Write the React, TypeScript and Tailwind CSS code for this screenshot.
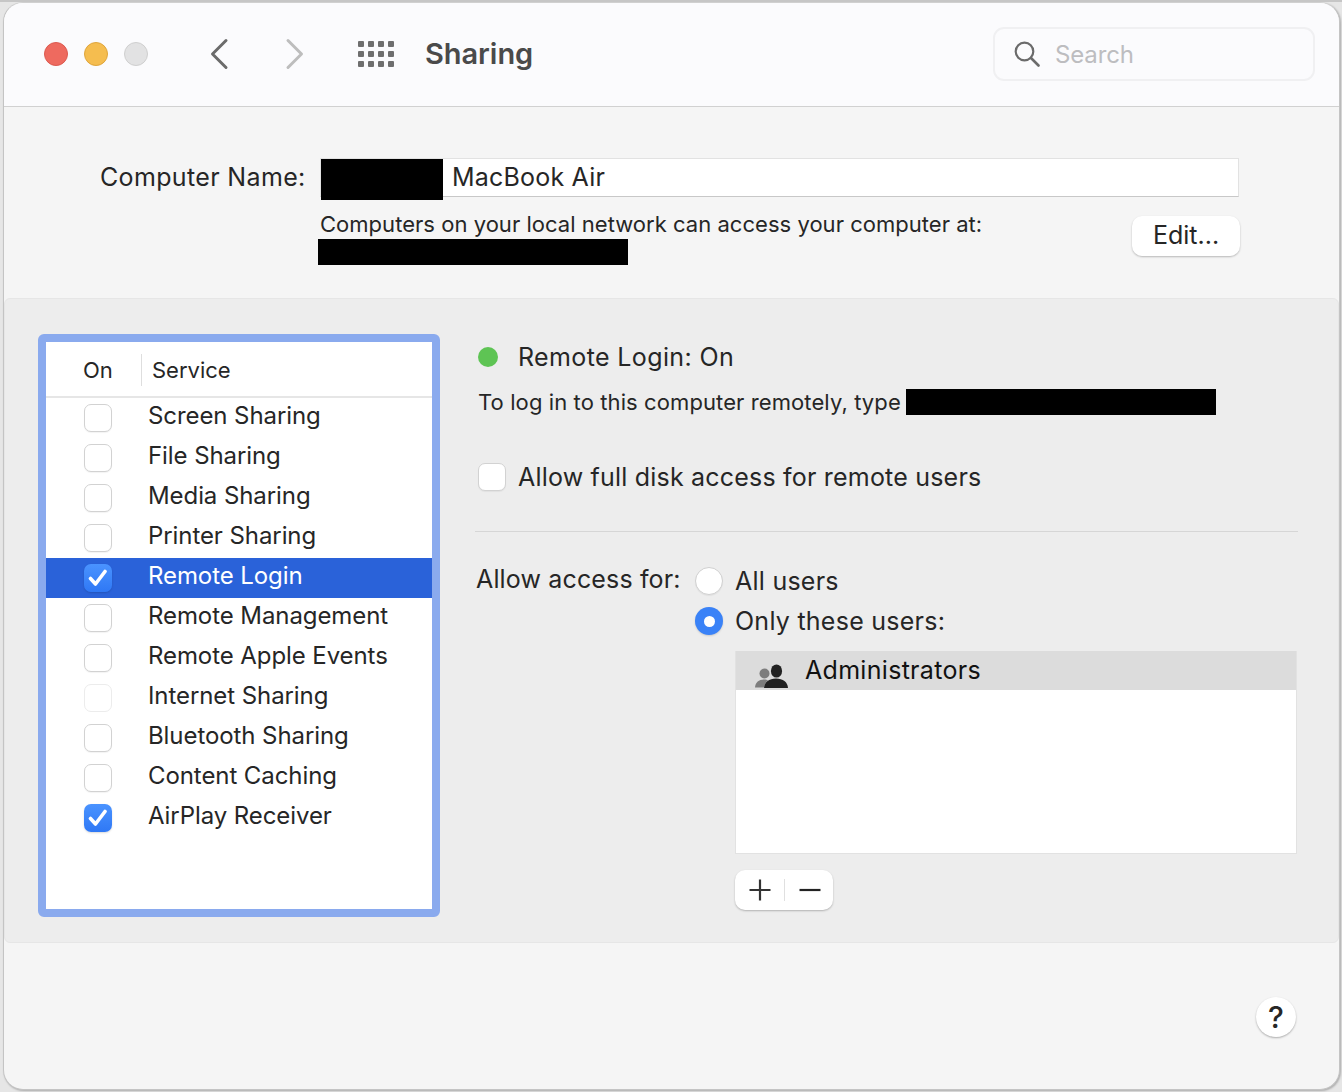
import React from "react";

const services: { name: string; on?: boolean; selected?: boolean; dim?: boolean }[] = [
  { name: "Screen Sharing" },
  { name: "File Sharing" },
  { name: "Media Sharing" },
  { name: "Printer Sharing" },
  { name: "Remote Login", on: true, selected: true },
  { name: "Remote Management" },
  { name: "Remote Apple Events" },
  { name: "Internet Sharing", dim: true },
  { name: "Bluetooth Sharing" },
  { name: "Content Caching" },
  { name: "AirPlay Receiver", on: true },
];

function Check({ on, dim }: { on?: boolean; dim?: boolean }) {
  if (on) {
    return (
      <span className="flex h-[28px] w-[28px] shrink-0 items-center justify-center rounded-[7px] bg-gradient-to-b from-[#4a93ff] to-[#2f78f5] shadow-[0_1px_2px_rgba(0,0,0,0.15)]">
        <svg width="20" height="20" viewBox="0 0 20 20" fill="none">
          <path d="M2.5 10.5 L7.5 16 L17 3.5" stroke="#fff" strokeWidth="3.6" strokeLinecap="round" strokeLinejoin="round" />
        </svg>
      </span>
    );
  }
  return (
    <span
      className={
        dim
          ? "h-[28px] w-[28px] shrink-0 rounded-[7px] border border-[#ececec] bg-white"
          : "h-[28px] w-[28px] shrink-0 rounded-[7px] border border-[#d2d2d2] bg-white shadow-[0_1px_1px_rgba(0,0,0,0.05)]"
      }
    />
  );
}

function Redact({ className }: { className: string }) {
  return <div className={"bg-black " + className} />;
}

export default function App() {
  return (
    <div
      className="h-[1092px] w-[1342px] overflow-hidden border-t-2 border-[#c6c6c6] bg-[#e6e6e6] pb-[2px] pl-[3px] pr-[2px] text-[#262626] antialiased"
      style={{ fontFamily: '"Inter", "Liberation Sans", sans-serif' }}
    >
      <div className="flex h-[1088px] w-[1337px] flex-col overflow-hidden rounded-[20px] border border-[#c4c4c4] border-t-[#d0d0d0] bg-[#f5f5f5] shadow-[1px_1px_2px_rgba(0,0,0,0.25)]">
        {/* toolbar */}
        <div className="flex h-[104px] shrink-0 items-center border-b border-[#d1d1d1] bg-[#fbfbfd] pb-[2px] pl-[40px] pr-[24px]">
          <span className="h-[24px] w-[24px] rounded-full border border-[#dc5a50] bg-[#ee6a5f]" />
          <span className="ml-[16px] h-[24px] w-[24px] rounded-full border border-[#dfa53c] bg-[#f5bd4f]" />
          <span className="ml-[16px] h-[24px] w-[24px] rounded-full border border-[#cfcfcf] bg-[#e2e2e3]" />
          <svg className="ml-[61px]" width="20" height="32" viewBox="0 0 20 32" fill="none">
            <path d="M17 2.5 L3.5 16 L17 29.5" stroke="#6b6b6b" strokeWidth="3" strokeLinecap="round" strokeLinejoin="round" />
          </svg>
          <svg className="ml-[56px]" width="20" height="32" viewBox="0 0 20 32" fill="none">
            <path d="M3 2.5 L16.5 16 L3 29.5" stroke="#bdbdbd" strokeWidth="3" strokeLinecap="round" strokeLinejoin="round" />
          </svg>
          <svg className="ml-[53px]" width="36" height="26" viewBox="0 0 36 26" fill="#6e6e6e">
            {[0, 10, 20].map((y) =>
              [0, 10, 20, 30].map((x) => <rect key={x + "-" + y} x={x} y={y} width="6" height="6" rx="1" />)
            )}
          </svg>
          <div className="ml-[31px] text-[29px] font-semibold tracking-[-0.05px] text-[#4a4a4a]">Sharing</div>
          <div className="ml-auto flex h-[54px] w-[322px] items-center rounded-[11px] border-2 border-[#f0f0f2] pl-[19px]">
            <svg width="26" height="26" viewBox="0 0 26 26" fill="none">
              <circle cx="10.5" cy="10.5" r="8.8" stroke="#6b6b6b" strokeWidth="2.2" />
              <path d="M17 17 L24.5 24.5" stroke="#6b6b6b" strokeWidth="2.6" strokeLinecap="round" />
            </svg>
            <span className="ml-[15px] translate-y-[1px] text-[24px] tracking-[-0.15px] text-[#bdbdc0]">Search</span>
          </div>
        </div>

        {/* computer name */}
        <div className="flex h-[191px] shrink-0 flex-col pl-[96px] pt-[51px]">
          <div className="flex items-center">
            <div className="w-[205px] whitespace-nowrap text-[25px] leading-[39px] tracking-[0.35px]">Computer Name:</div>
            <div className="ml-[15px] flex h-[39px] w-[919px] items-start border border-[#e2e2e2] border-b-[#c8c8c8] bg-white">
              <Redact className="h-[41px] w-[122px] shrink-0" />
              <span className="ml-[9px] text-[25px] leading-[37px] tracking-[0.2px] text-[#262626]">MacBook Air</span>
            </div>
          </div>
          <div className="flex">
            <div className="ml-[220px] w-[812px] pt-[14px]">
              <div className="text-[22px] leading-[26px] tracking-[0.03px]">Computers on your local network can access your computer at:</div>
              <Redact className="-ml-[2px] mt-[2px] h-[26px] w-[310px]" />
            </div>
            <div className="mt-[19px] flex h-[40px] w-[108px] items-center justify-center rounded-[10px] bg-white text-[25px] shadow-[0_1px_2px_rgba(0,0,0,0.25)]">
              Edit...
            </div>
          </div>
        </div>

        {/* main panel */}
        <div className="flex h-[645px] shrink-0 rounded-[6px] border border-[#e6e6e6] bg-[#ededed] pl-[33px] pt-[35px]">
          <div className="h-[583px] w-[402px] shrink-0 rounded-[6px] border-[8px] border-[#8aaaee] bg-white">
            <div className="flex h-[56px] items-center border-b-2 border-[#e6e6e6] pt-[2px] text-[22px]">
              <span className="ml-[37px] w-[58px]">On</span>
              <span className="h-[32px] w-[1px] bg-[#dedede]" />
              <span className="ml-[10px]">Service</span>
            </div>
            {services.map((s) => (
              <div
                key={s.name}
                className={
                  s.selected
                    ? "flex h-[40px] items-center bg-[#2a62d9] pl-[38px] text-white"
                    : "flex h-[40px] items-center pl-[38px]"
                }
              >
                <Check on={s.on} dim={s.dim} />
                <span className="ml-[36px] -translate-y-[2px] text-[24px] tracking-[-0.08px]">{s.name}</span>
              </div>
            ))}
          </div>

          <div className="ml-[34px] flex w-[824px] flex-col">
            <div className="flex h-[46px] items-center pl-[4px]">
              <span className="h-[20px] w-[20px] rounded-full bg-[#5ec454]" />
              <span className="ml-[20px] translate-y-[1px] text-[25px] tracking-[0.37px]">Remote Login: On</span>
            </div>
            <div className="mt-[9px] flex h-[26px] items-center pl-[4px]">
              <span className="text-[22px] tracking-[0.1px]">To log in to this computer remotely, type</span>
              <Redact className="ml-[5px] h-[26px] w-[310px]" />
            </div>
            <div className="mt-[48px] flex h-[28px] items-center pl-[4px]">
              <Check />
              <span className="ml-[12px] translate-y-[1px] text-[25px] tracking-[0.2px]">Allow full disk access for remote users</span>
            </div>
            <div className="ml-[1px] mt-[40px] h-[1px] bg-[#d6d6d6]" />
            <div className="mt-[35px] flex h-[28px] items-center">
              <span className="ml-[2px] w-[219px] -translate-y-[1px] text-[25px] tracking-[0.15px]">Allow access for:</span>
              <span className="h-[28px] w-[28px] rounded-full border border-[#d0d0d0] bg-white shadow-[0_1px_1px_rgba(0,0,0,0.05)]" />
              <span className="ml-[12px] translate-y-[1px] text-[25px] tracking-[0.25px]">All users</span>
            </div>
            <div className="mt-[12px] flex h-[28px] items-center pl-[221px]">
              <span className="flex h-[28px] w-[28px] items-center justify-center rounded-full bg-[#3a82f7] shadow-[0_1px_2px_rgba(0,0,0,0.15)]">
                <span className="h-[11px] w-[11px] rounded-full bg-white" />
              </span>
              <span className="ml-[12px] translate-y-[1px] text-[25px] tracking-[0.25px]">Only these users:</span>
            </div>
            <div className="ml-[261px] mt-[16px] h-[203px] w-[562px] border border-t-0 border-[#e2e2e2] bg-white">
              <div className="flex h-[39px] items-center bg-[#dcdcdc] pl-[18px]">
                <svg width="36" height="34" viewBox="0 0 36 34">
                  <circle cx="10.5" cy="19.5" r="5" fill="#7d7d7d" />
                  <path d="M1 33.5 C1.5 28 5 25.5 10.5 25.5 C12 25.5 13 25.8 14 26.2 C11.5 28 10.5 30.5 10 33.5 Z" fill="#7d7d7d" />
                  <ellipse cx="22.5" cy="17" rx="5.6" ry="6.6" fill="#222" />
                  <path d="M10 34 C10.5 28 15 24.5 22 24.5 C29 24.5 33.5 28 34 34 Z" fill="#222" />
                </svg>
                <span className="ml-[15px] text-[25px] tracking-[0.3px] text-[#111]">Administrators</span>
              </div>
            </div>
            <div className="ml-[261px] mt-[16px] flex h-[40px] w-[98px] items-center rounded-[10px] bg-white shadow-[0_1px_2px_rgba(0,0,0,0.25)]">
              <svg className="ml-[14px]" width="22" height="22" viewBox="0 0 22 22">
                <path d="M0.5 11 H21.5 M11 0.5 V21.5" stroke="#333" strokeWidth="2.2" />
              </svg>
              <span className="ml-[13px] h-[22px] w-[1px] bg-[#e0e0e0]" />
              <svg className="ml-[14px]" width="22" height="4" viewBox="0 0 22 4">
                <path d="M0.5 2 H21.5" stroke="#222" strokeWidth="2.2" />
              </svg>
            </div>
          </div>
        </div>

        {/* footer */}
        <div className="flex flex-1 justify-end pr-[43px] pt-[54px]">
          <div className="flex h-[40px] w-[40px] items-center justify-center rounded-full bg-white text-[30px] font-medium text-[#262626] shadow-[0_1px_2px_rgba(0,0,0,0.3)]">
            ?
          </div>
        </div>
      </div>
    </div>
  );
}
